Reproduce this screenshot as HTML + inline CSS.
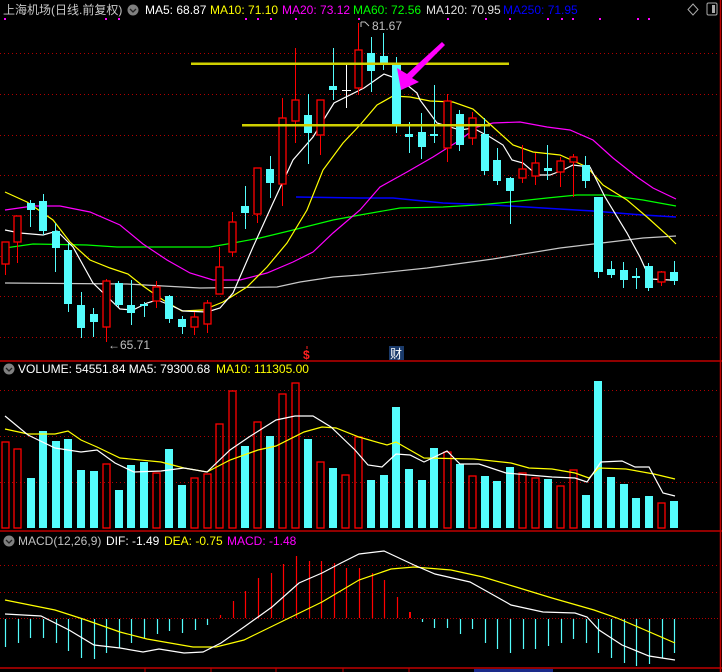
<!DOCTYPE html>
<html><head><meta charset="utf-8"><style>
html,body{margin:0;padding:0;background:#000;width:722px;height:672px;overflow:hidden}
svg{display:block}
text{font-family:"Liberation Sans","Noto Sans CJK SC",sans-serif;font-size:12px}
</style></head><body>
<svg width="722" height="672" viewBox="0 0 722 672" xmlns="http://www.w3.org/2000/svg">
<rect width="722" height="672" fill="#000"/>
<!-- borders -->
<g stroke="#c00000" stroke-width="1.5">
<line x1="0" y1="361" x2="722" y2="361"/>
<line x1="0" y1="531" x2="722" y2="531"/>
<line x1="0" y1="668" x2="722" y2="668"/>
<line x1="720.5" y1="0" x2="720.5" y2="672"/>
</g>
<g stroke="#c00000" stroke-width="1">
<line x1="145" y1="668" x2="145" y2="672"/><line x1="211" y1="668" x2="211" y2="672"/><line x1="276" y1="668" x2="276" y2="672"/><line x1="343" y1="668" x2="343" y2="672"/><line x1="409" y1="668" x2="409" y2="672"/>
</g>
<rect x="474" y="669" width="79" height="3" fill="#1a2a8a"/>
<!-- grids -->
<g stroke="#b00000" stroke-width="1" stroke-dasharray="1,3">
<line x1="0" y1="53.5" x2="720" y2="53.5"/><line x1="0" y1="94.5" x2="720" y2="94.5"/><line x1="0" y1="135.5" x2="720" y2="135.5"/><line x1="0" y1="175.5" x2="720" y2="175.5"/><line x1="0" y1="215.5" x2="720" y2="215.5"/><line x1="0" y1="256.5" x2="720" y2="256.5"/><line x1="0" y1="296.5" x2="720" y2="296.5"/><line x1="0" y1="337.5" x2="720" y2="337.5"/>
<line x1="0" y1="390.5" x2="720" y2="390.5"/><line x1="0" y1="436.5" x2="720" y2="436.5"/><line x1="0" y1="482.5" x2="720" y2="482.5"/>
<line x1="0" y1="565.5" x2="720" y2="565.5"/><line x1="0" y1="592.5" x2="720" y2="592.5"/><line x1="0" y1="618.5" x2="720" y2="618.5" stroke-dasharray="1,2"/>
</g>
<!-- header -->
<text x="3" y="14" fill="#c8c8c8" font-size="13">上海机场(日线.前复权)</text>
<circle cx="133" cy="10" r="5.5" fill="#808080"/><path d="M130 9 L133 12 L136 9" stroke="#222" stroke-width="1.3" fill="none"/>
<text x="145" y="14" fill="#fff">MA5: 68.87</text>
<text x="210" y="14" fill="#ffff00">MA10: 71.10</text>
<text x="282" y="14" fill="#ff00ff">MA20: 73.12</text>
<text x="353" y="14" fill="#00ff00">MA60: 72.56</text>
<text x="426" y="14" fill="#e0e0e0">MA120: 70.95</text>
<text x="503" y="14" fill="#0000ff">MA250: 71.95</text>
<path d="M693 4 L698 9.5 L693 15 L688 9.5 Z" stroke="#aaa" fill="none"/>
<rect x="707" y="3" width="10" height="12" rx="1.5" stroke="#aaa" fill="none"/><rect x="712" y="5" width="3" height="8" fill="#aaa"/>
<g fill="#ff00ff">
<rect x="4" y="18" width="2" height="2"/><rect x="105" y="18" width="2" height="2"/><rect x="118" y="18" width="2" height="2"/><rect x="245" y="18" width="2" height="2"/><rect x="257" y="18" width="2" height="2"/><rect x="270" y="18" width="2" height="2"/><rect x="295" y="18" width="2" height="2"/><rect x="358" y="18" width="2" height="2"/><rect x="447" y="18" width="2" height="2"/><rect x="485" y="18" width="2" height="2"/><rect x="509" y="18" width="2" height="2"/><rect x="547" y="18" width="2" height="2"/><rect x="561" y="18" width="2" height="2"/><rect x="572" y="18" width="2" height="2"/><rect x="599" y="18" width="2" height="2"/><rect x="637" y="18" width="2" height="2"/><rect x="648" y="18" width="2" height="2"/>
</g>
<!-- MA lines main -->
<g fill="none" stroke-width="1.2">
<polyline stroke="#c8c8c8" points="5,283 127,284 200,288 277,287 300,282 333,277 360,275 427,268 493,259 560,248 610,242 643,238 676,236"/>
<polyline stroke="#0000ff" stroke-width="1.5" points="296,197 360,198 393,198 443,203 493,205 543,208 593,211 643,215 676,217"/>
<polyline stroke="#00ff00" points="5,248 33,244 87,245 117,247 167,247 210,247 233,243 260,238 293,230 333,220 360,215 400,208 443,207 477,205 510,202 547,198 577,195 607,195 643,200 676,206"/>
<polyline stroke="#ff00ff" points="5,210 33,206 60,206 90,212 120,225 143,244 167,260 190,273 213,280 240,280 267,273 293,262 313,252 333,233 360,210 380,187 407,172 433,157 460,140 477,127 493,123 520,122 547,127 570,130 593,140 613,158 637,177 653,188 676,199"/>
<polyline stroke="#ffff00" points="5,192 27,202 53,220 70,242 90,260 110,268 128,274 143,286 163,300 182,311 203,310 223,302 247,287 267,267 287,243 307,210 323,170 343,143 360,125 377,105 393,96 410,97 430,101 453,102 473,109 493,127 513,145 533,152 560,155 587,167 603,185 627,200 647,217 667,235 676,244"/>
<polyline stroke="#ffffff" points="5,230 20,233 43,235 57,231 73,247 93,283 120,309 133,310 147,303 157,300 170,305 183,311 207,312 220,308 233,293 253,247 273,203 293,160 313,137 334,103 364,88 384,74 401,80 417,93 420,100 437,123 460,130 473,128 490,137 503,145 512,160 523,163 537,175 550,175 563,170 573,165 590,167 605,197 627,233 640,257 650,279 670,280 676,279"/>
</g>
<!-- candles: wicks -->
<g stroke="#54fcfc" stroke-width="1">
<line x1="30.5" y1="200" x2="30.5" y2="227"/><line x1="43.5" y1="194" x2="43.5" y2="235"/><line x1="55.5" y1="223" x2="55.5" y2="272"/><line x1="68.5" y1="243" x2="68.5" y2="312"/><line x1="81.5" y1="292" x2="81.5" y2="338"/><line x1="93.5" y1="308" x2="93.5" y2="337"/><line x1="118.5" y1="281" x2="118.5" y2="307"/><line x1="131.5" y1="280" x2="131.5" y2="325"/><line x1="144.5" y1="302" x2="144.5" y2="317"/><line x1="169.5" y1="295" x2="169.5" y2="323"/><line x1="182.5" y1="316" x2="182.5" y2="334"/><line x1="245.5" y1="186" x2="245.5" y2="229"/><line x1="270.5" y1="156" x2="270.5" y2="198"/><line x1="308.5" y1="94" x2="308.5" y2="164"/><line x1="333.5" y1="48" x2="333.5" y2="100"/><line x1="371.5" y1="37" x2="371.5" y2="92"/><line x1="383.5" y1="33" x2="383.5" y2="70"/><line x1="396.5" y1="57" x2="396.5" y2="133"/><line x1="409.5" y1="122" x2="409.5" y2="153"/><line x1="421.5" y1="113" x2="421.5" y2="159"/><line x1="434.5" y1="85" x2="434.5" y2="143"/><line x1="459.5" y1="110" x2="459.5" y2="151"/><line x1="484.5" y1="118" x2="484.5" y2="175"/><line x1="497.5" y1="148" x2="497.5" y2="185"/><line x1="510.5" y1="177" x2="510.5" y2="224"/><line x1="547.5" y1="145" x2="547.5" y2="180"/><line x1="585.5" y1="156" x2="585.5" y2="188"/><line x1="598.5" y1="197" x2="598.5" y2="278"/><line x1="611.5" y1="261" x2="611.5" y2="278"/><line x1="623.5" y1="262" x2="623.5" y2="288"/><line x1="636.5" y1="268" x2="636.5" y2="289"/><line x1="648.5" y1="263" x2="648.5" y2="291"/><line x1="674.5" y1="261" x2="674.5" y2="285"/>
</g>
<g stroke="#ff0000" stroke-width="1">
<line x1="5.5" y1="264" x2="5.5" y2="275"/><line x1="17.5" y1="242" x2="17.5" y2="263"/><line x1="106.5" y1="279" x2="106.5" y2="342"/><line x1="156.5" y1="281" x2="156.5" y2="308"/><line x1="194.5" y1="312" x2="194.5" y2="335"/><line x1="207.5" y1="300" x2="207.5" y2="333"/><line x1="219.5" y1="247" x2="219.5" y2="294"/><line x1="232.5" y1="212" x2="232.5" y2="257"/><line x1="257.5" y1="168" x2="257.5" y2="223"/><line x1="282.5" y1="98" x2="282.5" y2="206"/><line x1="295.5" y1="48" x2="295.5" y2="143"/><line x1="320.5" y1="100" x2="320.5" y2="155"/><line x1="358.5" y1="23" x2="358.5" y2="95"/><line x1="447.5" y1="94" x2="447.5" y2="162"/><line x1="472.5" y1="112" x2="472.5" y2="145"/><line x1="522.5" y1="145" x2="522.5" y2="183"/><line x1="535.5" y1="153" x2="535.5" y2="185"/><line x1="560.5" y1="157" x2="560.5" y2="187"/><line x1="573.5" y1="154" x2="573.5" y2="197"/><line x1="661.5" y1="271" x2="661.5" y2="286"/>
</g>
<line x1="346.5" y1="64" x2="346.5" y2="108" stroke="#fff"/><line x1="342" y1="90.5" x2="351" y2="90.5" stroke="#fff"/>
<g fill="#54fcfc">
<rect x="27" y="203" width="8" height="7"/><rect x="39" y="201" width="8" height="30"/><rect x="52" y="231" width="8" height="17"/><rect x="64" y="250" width="8" height="54"/><rect x="77" y="305" width="8" height="23"/><rect x="90" y="314" width="8" height="8"/><rect x="115" y="283" width="8" height="22"/><rect x="127" y="305" width="8" height="8"/><rect x="140" y="304" width="8" height="2"/><rect x="165" y="296" width="8" height="23"/><rect x="178" y="319" width="8" height="8"/><rect x="241" y="206" width="8" height="7"/><rect x="266" y="169" width="8" height="14"/><rect x="304" y="115" width="8" height="18"/><rect x="329" y="86" width="8" height="4"/><rect x="367" y="53" width="8" height="18"/><rect x="380" y="56" width="8" height="7"/><rect x="392" y="63" width="9" height="62"/><rect x="405" y="134" width="8" height="3"/><rect x="418" y="132" width="8" height="15"/><rect x="430" y="134" width="8" height="2"/><rect x="456" y="114" width="8" height="31"/><rect x="481" y="134" width="8" height="37"/><rect x="493" y="160" width="8" height="21"/><rect x="506" y="178" width="8" height="13"/><rect x="544" y="168" width="8" height="3"/><rect x="582" y="165" width="8" height="16"/><rect x="594" y="197" width="9" height="75"/><rect x="607" y="269" width="8" height="6"/><rect x="620" y="270" width="8" height="10"/><rect x="632" y="276" width="8" height="2"/><rect x="645" y="266" width="8" height="22"/><rect x="670" y="272" width="8" height="9"/>
</g>
<g fill="#000" stroke="#ff0000" stroke-width="1.3">
<rect x="2" y="242" width="7" height="22"/><rect x="14" y="216" width="7" height="26"/><rect x="103" y="281" width="7" height="46"/><rect x="153" y="287" width="7" height="14"/><rect x="191" y="317" width="7" height="10"/><rect x="204" y="303" width="7" height="21"/><rect x="216" y="267" width="7" height="27"/><rect x="229" y="222" width="7" height="30"/><rect x="254" y="168" width="7" height="46"/><rect x="279" y="118" width="7" height="66"/><rect x="292" y="100" width="7" height="21"/><rect x="317" y="100" width="7" height="35"/><rect x="355" y="50" width="7" height="38"/><rect x="444" y="101" width="7" height="47"/><rect x="469" y="118" width="7" height="20"/><rect x="519" y="169" width="7" height="9"/><rect x="532" y="163" width="7" height="13"/><rect x="557" y="161" width="7" height="11"/><rect x="570" y="157" width="7" height="5"/><rect x="658" y="272" width="7" height="10"/>
</g>
<!-- yellow horizontal lines -->
<rect x="191" y="62.5" width="318" height="2.5" fill="#d0d000"/>
<rect x="242" y="124" width="248" height="2.5" fill="#d0d000"/>
<!-- arrow -->
<polygon points="401,90 397,68 407,74 442,42 445,45 412,78 419,82" fill="#ff00ff"/>
<text x="372" y="30" fill="#c0c0c0">81.67</text><path d="M361 22 L361 27 M361 22 L365 22 L369 26" stroke="#c0c0c0" fill="none"/>
<text x="108" y="349" fill="#c0c0c0">←65.71</text>
<text x="303" y="359" fill="#ff2020" font-size="12" font-weight="bold">$</text><line x1="307" y1="346" x2="307" y2="349" stroke="#ff2020"/>
<rect x="389" y="346" width="15" height="14" fill="#1a3a6a"/><text x="390" y="358" fill="#fff" font-size="12">财</text>
<!-- volume -->
<circle cx="9" cy="369" r="5.5" fill="#808080"/><path d="M6 368 L9 371 L12 368" stroke="#222" stroke-width="1.3" fill="none"/>
<text x="18" y="373" fill="#fff">VOLUME: 54551.84  MA5: 79300.68</text>
<text x="216" y="373" fill="#ffff00">MA10: 111305.00</text>
<g fill="#54fcfc">
<rect x="27" y="478" width="8" height="50"/><rect x="39" y="431" width="8" height="97"/><rect x="52" y="441" width="8" height="87"/><rect x="64" y="439" width="8" height="89"/><rect x="77" y="470" width="8" height="58"/><rect x="90" y="471" width="8" height="57"/><rect x="115" y="490" width="8" height="38"/><rect x="127" y="465" width="8" height="63"/><rect x="140" y="462" width="8" height="66"/><rect x="165" y="449" width="8" height="79"/><rect x="178" y="485" width="8" height="43"/><rect x="241" y="446" width="8" height="82"/><rect x="266" y="436" width="8" height="92"/><rect x="304" y="439" width="8" height="89"/><rect x="329" y="468" width="8" height="60"/><rect x="367" y="480" width="8" height="48"/><rect x="380" y="475" width="8" height="53"/><rect x="392" y="407" width="8" height="121"/><rect x="405" y="469" width="8" height="59"/><rect x="418" y="480" width="8" height="48"/><rect x="430" y="448" width="8" height="80"/><rect x="456" y="464" width="8" height="64"/><rect x="481" y="476" width="8" height="52"/><rect x="493" y="481" width="8" height="47"/><rect x="506" y="467" width="8" height="61"/><rect x="544" y="479" width="8" height="49"/><rect x="582" y="495" width="8" height="33"/><rect x="594" y="381" width="8" height="147"/><rect x="607" y="477" width="8" height="51"/><rect x="620" y="484" width="8" height="44"/><rect x="632" y="498" width="8" height="30"/><rect x="645" y="496" width="8" height="32"/><rect x="670" y="501" width="8" height="27"/>
</g>
<g fill="none" stroke="#ff0000" stroke-width="1.3">
<rect x="2" y="442" width="7" height="86"/><rect x="14" y="449" width="7" height="79"/><rect x="103" y="464" width="7" height="64"/><rect x="153" y="473" width="7" height="55"/><rect x="191" y="478" width="7" height="50"/><rect x="204" y="474" width="7" height="54"/><rect x="216" y="424" width="7" height="104"/><rect x="229" y="391" width="7" height="137"/><rect x="254" y="422" width="7" height="106"/><rect x="279" y="394" width="7" height="134"/><rect x="292" y="383" width="7" height="145"/><rect x="317" y="462" width="7" height="66"/><rect x="342" y="475" width="7" height="53"/><rect x="355" y="437" width="7" height="91"/><rect x="444" y="452" width="7" height="76"/><rect x="469" y="476" width="7" height="52"/><rect x="519" y="473" width="7" height="55"/><rect x="532" y="478" width="7" height="50"/><rect x="557" y="486" width="7" height="42"/><rect x="570" y="470" width="7" height="58"/><rect x="658" y="503" width="7" height="25"/>
</g>
<rect x="229" y="391" width="7" height="137" fill="none" stroke="#888" stroke-width="1" opacity="0"/>
<g fill="none" stroke-width="1.2">
<polyline stroke="#ffff00" points="5,429 28,434 55,434 68,431 81,440 97,447 120,458 161,462 184,468 207,472 230,460 258,450 276,446 304,432 322,427 336,428 359,437 387,445 396,442 424,458 474,459 511,463 529,468 552,469 575,473 589,478 599,468 626,469 654,474 675,479"/>
<polyline stroke="#ffffff" points="5,416 28,435 55,448 81,452 97,450 115,463 134,472 161,471 184,468 207,472 230,450 249,437 276,420 295,416 313,416 331,427 355,450 368,465 382,467 396,454 410,455 424,462 447,451 460,464 479,464 506,473 529,475 552,477 575,478 587,482 601,462 622,461 635,467 649,467 663,493 675,496"/>
</g>
<!-- MACD -->
<circle cx="9" cy="541" r="5.5" fill="#808080"/><path d="M6 540 L9 543 L12 540" stroke="#222" stroke-width="1.3" fill="none"/>
<text x="18" y="545" fill="#c0c0c0">MACD(12,26,9)</text>
<text x="106" y="545" fill="#fff">DIF: -1.49</text>
<text x="164" y="545" fill="#ffff00">DEA: -0.75</text>
<text x="227" y="545" fill="#ff00ff">MACD: -1.48</text>
<g stroke="#54fcfc" stroke-width="1.2">
<line x1="5.5" y1="619" x2="5.5" y2="647"/><line x1="18.5" y1="619" x2="18.5" y2="643"/><line x1="30.5" y1="619" x2="30.5" y2="638"/><line x1="43.5" y1="619" x2="43.5" y2="638"/><line x1="56.5" y1="619" x2="56.5" y2="643"/><line x1="68.5" y1="619" x2="68.5" y2="651"/><line x1="81.5" y1="619" x2="81.5" y2="658"/><line x1="94.5" y1="619" x2="94.5" y2="659"/><line x1="106.5" y1="619" x2="106.5" y2="653"/><line x1="119.5" y1="619" x2="119.5" y2="648"/><line x1="131.5" y1="619" x2="131.5" y2="643"/><line x1="144.5" y1="619" x2="144.5" y2="638"/><line x1="157.5" y1="619" x2="157.5" y2="634"/><line x1="169.5" y1="619" x2="169.5" y2="631"/><line x1="182.5" y1="619" x2="182.5" y2="633"/><line x1="195.5" y1="619" x2="195.5" y2="630"/><line x1="207.5" y1="619" x2="207.5" y2="625"/>
<line x1="422.5" y1="619" x2="422.5" y2="622"/><line x1="434.5" y1="619" x2="434.5" y2="628"/><line x1="447.5" y1="619" x2="447.5" y2="628"/><line x1="460.5" y1="619" x2="460.5" y2="634"/><line x1="472.5" y1="619" x2="472.5" y2="629"/><line x1="485.5" y1="619" x2="485.5" y2="643"/><line x1="497.5" y1="619" x2="497.5" y2="649"/><line x1="510.5" y1="619" x2="510.5" y2="653"/><line x1="523.5" y1="619" x2="523.5" y2="649"/><line x1="535.5" y1="619" x2="535.5" y2="649"/><line x1="548.5" y1="619" x2="548.5" y2="646"/><line x1="561.5" y1="619" x2="561.5" y2="643"/><line x1="573.5" y1="619" x2="573.5" y2="639"/><line x1="586.5" y1="619" x2="586.5" y2="643"/><line x1="598.5" y1="619" x2="598.5" y2="653"/><line x1="611.5" y1="619" x2="611.5" y2="658"/><line x1="624.5" y1="619" x2="624.5" y2="663"/><line x1="636.5" y1="619" x2="636.5" y2="666"/><line x1="649.5" y1="619" x2="649.5" y2="664"/><line x1="662.5" y1="619" x2="662.5" y2="658"/><line x1="674.5" y1="619" x2="674.5" y2="653"/>
</g>
<g stroke="#ff0000" stroke-width="1.2">
<line x1="220.5" y1="618" x2="220.5" y2="615"/><line x1="233.5" y1="618" x2="233.5" y2="601"/><line x1="245.5" y1="618" x2="245.5" y2="591"/><line x1="258.5" y1="618" x2="258.5" y2="578"/><line x1="271.5" y1="618" x2="271.5" y2="573"/><line x1="283.5" y1="618" x2="283.5" y2="564"/><line x1="296.5" y1="618" x2="296.5" y2="556"/><line x1="309.5" y1="618" x2="309.5" y2="561"/><line x1="321.5" y1="618" x2="321.5" y2="561"/><line x1="334.5" y1="618" x2="334.5" y2="563"/><line x1="346.5" y1="618" x2="346.5" y2="568"/><line x1="359.5" y1="618" x2="359.5" y2="568"/><line x1="372.5" y1="618" x2="372.5" y2="573"/><line x1="384.5" y1="618" x2="384.5" y2="580"/><line x1="397.5" y1="618" x2="397.5" y2="597"/><line x1="410" y1="618" x2="410" y2="612" stroke-width="2"/>
</g>
<g fill="none" stroke-width="1.2">
<polyline stroke="#ffff00" points="5,600 55,610 83,619 120,632 147,639 193,647 216,647 244,640 285,620 322,602 359,580 391,569 414,567 451,570 483,577 516,587 552,598 594,610 617,618 645,630 675,643"/>
<polyline stroke="#ffffff" points="5,614 41,616 69,630 94,645 120,648 143,652 159,649 184,653 203,652 221,643 244,627 272,607 299,583 322,573 341,563 359,554 384,551 414,565 435,574 470,582 488,592 511,605 543,612 575,613 587,617 599,630 622,645 649,656 675,660"/>
</g>
</svg>
</body></html>
